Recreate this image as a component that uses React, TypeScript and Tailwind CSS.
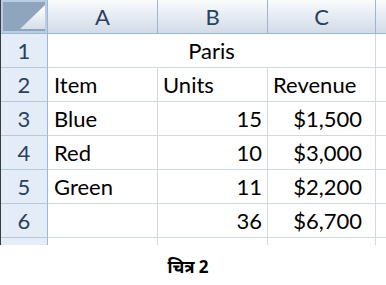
const rows: { n: number; a?: string; b?: string; c?: string; merged?: string }[] = [
  { n: 1, merged: "Paris" },
  { n: 2, a: "Item", b: "Units", c: "Revenue" },
  { n: 3, a: "Blue", b: "15", c: "$1,500" },
  { n: 4, a: "Red", b: "10", c: "$3,000" },
  { n: 5, a: "Green", b: "11", c: "$2,200" },
  { n: 6, b: "36", c: "$6,700" },
];

const colHead =
  "h-[34px] border-b border-r border-[#9eb6ce] bg-gradient-to-b from-[#f9fbfd] to-[#d2dbe8] flex items-center justify-center text-[#27415f]";
const rowHead =
  "h-[34px] border-b border-r border-b-[#b6c8dd] border-r-[#9eb6ce] bg-[#e4ecf7] flex items-center justify-center text-[#27415f]";
const cell = "h-[34px] border-b border-r border-[#d0d7e5] flex items-center text-black";

function Corner() {
  return (
    <div className="h-[34px] border-b border-r border-[#9eb6ce] bg-[#b9cde6] p-[2px]">
      <div className="h-full w-full bg-[#8ea5bd]">
        <svg width="44" height="28" viewBox="0 0 44 28" className="block">
          <defs>
            <linearGradient id="tri" x1="0" y1="0" x2="0" y2="1">
              <stop offset="0" stopColor="#ffffff" />
              <stop offset="1" stopColor="#d6dee9" />
            </linearGradient>
          </defs>
          <polygon points="42,3 42,27 17,27" fill="url(#tri)" />
        </svg>
      </div>
    </div>
  );
}

export default function App() {
  return (
    <div
      className="w-[386px] h-[285px] bg-white flex flex-col overflow-hidden"
      style={{ fontFamily: "Lato, 'Open Sans', sans-serif" }}
    >
      {/* Sheet */}
      <div className="h-[245px] overflow-hidden border-l border-[#3c3c3c] shrink-0">
        <div className="grid grid-cols-[47px_110px_110px_108px_1fr] text-[22px] leading-none">
          <Corner />
          <div className={colHead}>A</div>
          <div className={colHead}>B</div>
          <div className={colHead}>C</div>
          <div className={colHead + " border-r-0"}></div>

          {rows.map((r) => (
            <div key={r.n} className="contents">
              <div className={rowHead}>{r.n}</div>
              {r.merged ? (
                <div className="col-span-3 h-[34px] border-b border-r border-[#d0d7e5] flex items-center justify-center text-black">
                  {r.merged}
                </div>
              ) : (
                <>
                  <div className={cell + " pl-[6px]"}>{r.a}</div>
                  <div className={cell + (r.n === 2 ? " pl-[5px]" : " justify-end pr-[5px]")}>{r.b}</div>
                  <div className={cell + (r.n === 2 ? " pl-[5px]" : " justify-end pr-[13px]")}>{r.c}</div>
                </>
              )}
              <div className={cell + " border-r-0"}></div>
            </div>
          ))}

          {/* row 7, cut by the window edge */}
          <div className={rowHead}></div>
          <div className={cell}></div>
          <div className={cell}></div>
          <div className={cell}></div>
          <div className={cell + " border-r-0"}></div>
        </div>
      </div>

      {/* Caption */}
      <div className="flex-1 flex items-center justify-center pr-[10px] pt-[4px]">
        <span
          className="text-[17px] font-bold text-black"
          style={{ fontFamily: "'Noto Sans', 'Noto Sans Devanagari', sans-serif" }}
        >
          चित्र 2
        </span>
      </div>
    </div>
  );
}
